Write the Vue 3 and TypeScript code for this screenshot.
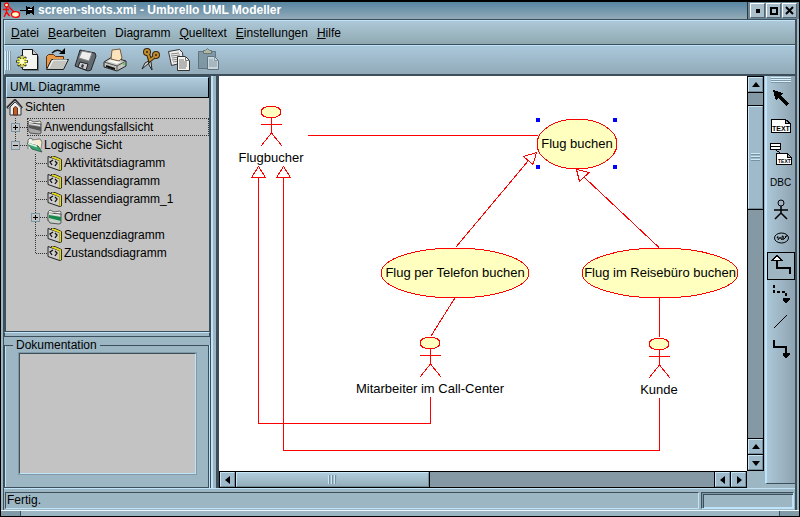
<script setup lang="ts">
import { ref } from 'vue'

interface MenuEntry { before: string; key: string; after: string }
interface TreeNode {
  label: string
  icon: 'home' | 'folder' | 'open' | 'green' | 'diagram'
  depth: number
  toggle?: '+' | '-'
  last?: boolean
}
interface Actor { name: string; x: number; y: number }
interface UseCase { name: string; x: number; y: number; rx: number }

const menus: MenuEntry[] = [
  { before: '', key: 'D', after: 'atei' },
  { before: '', key: 'B', after: 'earbeiten' },
  { before: 'Dia', key: 'g', after: 'ramm' },
  { before: '', key: 'Q', after: 'uelltext' },
  { before: '', key: 'E', after: 'instellungen' },
  { before: '', key: 'H', after: 'ilfe' },
]

const nodes: TreeNode[] = [
  { label: 'Sichten', icon: 'home', depth: 0 },
  { label: 'Anwendungsfallsicht', icon: 'folder', depth: 1, toggle: '+' },
  { label: 'Logische Sicht', icon: 'open', depth: 1, toggle: '-', last: true },
  { label: 'Aktivitätsdiagramm', icon: 'diagram', depth: 2 },
  { label: 'Klassendiagramm', icon: 'diagram', depth: 2 },
  { label: 'Klassendiagramm_1', icon: 'diagram', depth: 2 },
  { label: 'Ordner', icon: 'green', depth: 2, toggle: '+' },
  { label: 'Sequenzdiagramm', icon: 'diagram', depth: 2 },
  { label: 'Zustandsdiagramm', icon: 'diagram', depth: 2, last: true },
]
const selected = ref('Anwendungsfallsicht')

const actors: Actor[] = [
  { name: 'Flugbucher', x: 52, y: 36 },
  { name: 'Mitarbeiter im Call-Center', x: 211, y: 267 },
  { name: 'Kunde', x: 440, y: 268 },
]
const useCases: UseCase[] = [
  { name: 'Flug buchen', x: 358, y: 68, rx: 40 },
  { name: 'Flug per Telefon buchen', x: 236, y: 197, rx: 74 },
  { name: 'Flug im Reisebüro buchen', x: 441, y: 197, rx: 78 },
]
const handles = [[319, 44], [396, 44], [319, 91], [396, 91]]

const tools = ['Auswahl', 'Text', 'Notiz', 'DBC', 'Akteur', 'Anwendungsfall', 'Generalisierung', 'Abhängigkeit', 'Assoziation', 'Gerichtete Assoziation']
const tool = ref('Generalisierung')
const docText = ref('')
</script>

<template>
  <div class="window">
    <header class="titlebar">
      <svg class="app-icon" width="17" height="17" viewBox="0 0 17 17" fill="none" stroke="#f00" stroke-width="1.3">
        <circle cx="3.5" cy="3" r="2" fill="#ffc" /><path d="M3.5 5v5M0 7.5h6M3.5 10L1 15M3.5 10l3 4M6 5l5 5" />
        <ellipse cx="12.5" cy="12.5" rx="4" ry="2.8" fill="#ffc" />
      </svg>
      <svg width="15" height="11" viewBox="0 0 15 11" shape-rendering="crispEdges">
        <path d="M0 5h7v1H0zM6 1h1v9H6zM7 2h2l1 1h2l1-2h1v9h-1l-1-2h-2L9 9H7z" fill="#000" />
        <path d="M8 4h4v1H8z" fill="#fff" />
      </svg>
      <h1>screen-shots.xmi - Umbrello UML Modeller</h1>
      <div class="window-buttons">
        <button aria-label="Minimieren"><svg width="11" height="11"><rect x="4" y="4" width="4" height="4" /></svg></button>
        <button aria-label="Maximieren"><svg width="11" height="11"><rect x="3" y="3" width="6" height="6" fill="none" stroke="#000" stroke-width="2" /></svg></button>
        <button aria-label="Schließen"><svg width="11" height="11"><path d="M2 2l7 7M9 2L2 9" stroke="#000" stroke-width="2" /></svg></button>
      </div>
    </header>

    <div class="shell">
      <nav class="menubar">
        <button v-for="m in menus" :key="m.key">{{ m.before }}<u>{{ m.key }}</u>{{ m.after }}</button>
      </nav>

      <div class="toolbar" role="toolbar">
        <span class="grip"></span>
        <button aria-label="Neu">
          <svg width="24" height="24" viewBox="0 0 24 24">
            <path d="M8 3h10l5 6v14H8z" fill="#667782" />
            <path d="M6.500 1.500h10l5 5v15h-15z" fill="#f4f4f0" stroke="#111" />
            <path d="M16.500 1.500v5h5" fill="#ccc" stroke="#111" />
            <path d="M6 7v13M0 13.500h12M2 9l8 9M10 9l-8 9" stroke="#333" stroke-width="2.500" />
            <path d="M6 8v11M1 13.500h10M2.500 10l7 7M9.500 10l-7 7" stroke="#ff2" stroke-width="1.600" /><circle cx="6" cy="13.500" r="2.500" fill="#ffc" />
          </svg>
        </button>
        <button aria-label="Öffnen">
          <svg width="24" height="24" viewBox="0 0 24 24">
            <path d="M1.500 20.500v-12l2-2h5l2 2h8v4" fill="#e99a4b" stroke="#5a3011" />
            <path d="M1.500 21.500l5-10h17l-5 10z" fill="#c4c4c0" stroke="#222" /><path d="M4 20l4-8h14" fill="none" stroke="#fff" />
            <path d="M7 5q5-5 10-1" fill="none" stroke="#111" stroke-width="1.500" /><path d="M14 6h6V0z" />
          </svg>
        </button>
        <button aria-label="Speichern">
          <svg width="24" height="24" viewBox="0 0 24 24">
            <path d="M6 2l15 3 1 3-5 14-3 1L1 18l1-3z" fill="#626b70" stroke="#24292c" />
            <path d="M8 3l10 2-3 8-10-3z" fill="#eee" stroke="#888" /><path d="M6 14l8 2-2 6-8-3z" fill="#c8ced1" stroke="#222" /><path d="M8 16l2 1-1 3-2-1z" fill="#333" />
          </svg>
        </button>
        <button aria-label="Drucken">
          <svg width="24" height="24" viewBox="0 0 24 24">
            <path d="M1 14l8-5 14 4v5l-9 5-13-4z" fill="#c6c6c1" stroke="#222" />
            <path d="M9 2l8-1 2 9-3 3-8-2z" fill="#fbe3bd" stroke="#775c3d" />
            <path d="M1 14l13 4 9-5M14 18v5" stroke="#555" fill="none" /><path d="M4 13l10 3 4-2-10-2z" fill="#f9f9f5" />
            <path d="M3 18l9 3" stroke="#111" stroke-width="2" /><circle cx="21" cy="16" r="1" fill="#3d3" />
          </svg>
        </button>
        <span class="gap"></span>
        <button aria-label="Ausschneiden">
          <svg width="24" height="24" viewBox="0 0 24 24" fill="none">
            <path d="M10 9l3 5 1 8-3-5zM16 10l-5 5-7 6 3-6z" fill="#ddd" stroke="#222" />
            <g stroke="#38250a" stroke-width="4"><circle cx="9" cy="4" r="2" /><circle cx="18" cy="7" r="2" /><path d="M10 6l2 6 4-3" /></g>
            <g stroke="#c08c2e" stroke-width="2"><circle cx="9" cy="4" r="2" /><circle cx="18" cy="7" r="2" /><path d="M10 6l2 6 4-3" /></g>
          </svg>
        </button>
        <button aria-label="Kopieren">
          <svg width="24" height="24" viewBox="0 0 24 24" fill="none" stroke="#333">
            <path d="M1.500 3.500l11-2 3 3 1 10-12 3z" fill="#eee" /><path d="M4 6l8-1M4 8l9-1M5 10l8-1M5 12l8-1M6 14l7-1" stroke="#888" />
            <path d="M10.500 8.500h8l4 4v10h-12z" fill="#f4f4f0" /><path d="M18.500 8.500v4h4M12 12h5M12 14h8M12 16h8M12 18h8M12 20h7" stroke="#777" />
          </svg>
        </button>
        <button aria-label="Einfügen">
          <svg class="disabled" width="24" height="24" viewBox="0 0 24 24" fill="none" stroke="#52646e">
            <path d="M2.500 3.500h17v17h-17z" fill="#78919b" /><path d="M7.500 5.500v-3h2l2-2 2 2h2v3z" fill="#b9b68e" />
            <path d="M11.500 8.500h7l4 4v9h-11z" fill="#d4dfe3" /><path d="M18.500 8.500v4h4M13 12h4M13 14h8M13 16h8M13 18h8" stroke="#80929c" />
          </svg>
        </button>
      </div>

      <main class="workspace">
        <aside class="sidebar">
          <section class="tree-panel">
            <h2>UML Diagramme</h2>
            <ul class="tree" role="tree">
              <li v-for="n in nodes" :key="n.label" :class="['row', 'depth-' + n.depth]" role="treeitem" @click="selected = n.label">
                <svg v-if="n.depth" class="branch" width="16" height="18" shape-rendering="crispEdges" fill="none">
                  <path :d="n.last ? 'M4.500 0V9' : 'M4.500 0V18'" stroke="#333" stroke-dasharray="1 1" />
                  <path d="M5 9.500H16" stroke="#333" stroke-dasharray="1 1" />
                  <template v-if="n.toggle">
                    <rect x="0.500" y="5.500" width="8" height="8" fill="#c3c3c3" stroke="#7b97a7" />
                    <path :d="n.toggle === '+' ? 'M2 9.500h5M4.500 7v5' : 'M2 9.500h5'" stroke="#000" />
                  </template>
                </svg>
                <span :class="['node', { current: selected === n.label }]">
                  <svg v-if="n.icon === 'home'" width="18" height="17" viewBox="0 0 18 17">
                    <path d="M4 8l5-5 6 5v8H4z" fill="#eee" stroke="#333" /><path d="M1 9l8-8 7 8" fill="none" stroke="#333" stroke-width="2.500" /><path d="M2 9l7-7 6 7" fill="none" stroke="#aaa" />
                    <path d="M7.500 16V9q2-3 4 0v7z" fill="#c75d20" stroke="#532" />
                  </svg>
                  <svg v-else-if="n.icon === 'diagram'" width="16" height="16" viewBox="0 0 16 16">
                    <path d="M4 1.500h4l6.500 3V15l-2 .5V6z" fill="#e6da19" stroke="#333" /><path d="M1 1.500L12.500 5.500v10L1 11.500z" fill="#ccc" stroke="#222" />
                    <path d="M6 5L3 7l2 3M8 6l2 2-2 3" fill="none" stroke="#111" stroke-width="1.300" /><path d="M5 2l8 3v10" fill="none" stroke="#e6da19" stroke-width="1.500" />
                  </svg>
                  <svg v-else width="16" height="16" viewBox="0 0 16 16">
                    <path d="M1 12V3l2-2 4 2 6-1 1 1v3" fill="#f1f1ec" stroke="#666" />
                    <template v-if="n.icon === 'open'">
                      <path d="M5 3l8-1 2 3-1 7" fill="#f6ebd0" stroke="#888" /><path d="M0 6l11 3 4 6-10-3z" fill="#36a56b" stroke="#365" /><path d="M1 6.500l9 3" stroke="#dff5e4" stroke-width="1.500" />
                    </template>
                    <template v-else>
                      <path d="M1 4l13 1v9l-2 1-9-1-2-3z" :fill="n.icon === 'green' ? '#c7d1c9' : '#aaa'" stroke="#555" />
                      <path d="M2 6l12 2v4L2 9z" :fill="n.icon === 'green' ? '#16884b' : '#555'" /><path d="M2 4.500l11 2" stroke="#eee" />
                    </template>
                  </svg>
                  <span>{{ n.label }}</span>
                </span>
              </li>
            </ul>
          </section>
          <div class="hsplit"></div>
          <fieldset class="docs">
            <legend>Dokumentation</legend>
            <textarea v-model="docText" aria-label="Dokumentation"></textarea>
          </fieldset>
        </aside>
        <div class="vsplit"></div>

        <div class="view">
          <div class="canvas">
            <svg class="diagram" width="528" height="395" fill="none" stroke="#f00">
              <g shape-rendering="crispEdges">
                <path d="M89 59.500H319" />
                <path d="M317.500 76.500L304.500 80.500L314 88.500ZM309.500 84.500L237 171" />
                <path d="M357.500 93.500L370 96.500L360.500 105.500ZM365.500 101.500L440 171.500" />
                <path d="M39.500 90.500L46.500 101.500H32.500ZM39.500 102V347.500H211.500V321" />
                <path d="M64.500 90.500L71.500 101.500H57.500ZM64.500 102V374.500H440.500V322" />
                <path d="M236.500 221L212 260M440.500 222V261" />
              </g>
              <g v-for="a in actors" :key="a.name" :transform="`translate(${a.x} ${a.y})`">
                <g shape-rendering="crispEdges">
                  <ellipse cx="0" cy="0" rx="10" ry="6" fill="#ffffc0" />
                  <path d="M0.500 6V21M-10 12.500H11M0.500 21L-10 34M0.500 21L11 34" />
                </g>
                <text x="0" y="50">{{ a.name }}</text>
              </g>
              <g v-for="u in useCases" :key="u.name" :transform="`translate(${u.x} ${u.y})`">
                <ellipse cx="0" cy="0" :rx="u.rx" ry="25" fill="#ffffc0" shape-rendering="crispEdges" />
                <text x="0" y="4">{{ u.name }}</text>
              </g>
              <rect v-for="(h, i) in handles" :key="i" :x="h[0] - 2" :y="h[1] - 2" width="4" height="4" fill="#00f" stroke="none" />
            </svg>
          </div>
          <div class="scroll vertical">
            <button aria-label="Nach oben"><svg width="10" height="10"><path d="M5 2l4 5H1z" /></svg></button>
            <span class="lead"></span>
            <span class="thumb"><i></i></span>
            <span class="track"></span>
            <button aria-label="Nach oben"><svg width="10" height="10"><path d="M5 2l4 5H1z" /></svg></button>
            <button aria-label="Nach unten"><svg width="10" height="10"><path d="M5 8L1 3h8z" /></svg></button>
          </div>
          <div class="scroll horizontal">
            <button aria-label="Nach links"><svg width="10" height="10"><path d="M2 5l5-4v8z" /></svg></button>
            <span class="thumb"><i></i></span>
            <span class="track"></span>
            <button aria-label="Nach links"><svg width="10" height="10"><path d="M2 5l5-4v8z" /></svg></button>
            <button aria-label="Nach rechts"><svg width="10" height="10"><path d="M8 5L3 1v8z" /></svg></button>
          </div>
        </div>

        <div class="palette" role="toolbar">
          <span class="palette-grip"></span>
          <button v-for="t in tools" :key="t" :aria-label="t" :class="{ active: tool === t }" @click="tool = t">
            <svg width="24" height="24" viewBox="0 0 24 24" fill="none" stroke="#000" shape-rendering="crispEdges">
              <path v-if="t === 'Auswahl'" d="M4 4l10 3-2 3 8 7-3 3-8-8-2 3z" fill="#000" stroke="none" />
              <template v-else-if="t === 'Text'">
                <path d="M2.500 5.500h14l5 4v9h-19zM16.500 5.500v4h5" fill="#fff" /><text class="glyph" x="3" y="17">TEXT</text>
              </template>
              <template v-else-if="t === 'Notiz'">
                <path d="M1.500 1.500h10v6h-10zM1.500 4.500h10" fill="#fff" /><path d="M7 8l6 5" stroke-dasharray="1 1" />
                <path d="M7.500 11.500h11l4 4v7h-15zM18.500 11.500v4h4" fill="#fff" /><text class="glyph tiny" x="9" y="21">TEXT</text>
              </template>
              <text v-else-if="t === 'DBC'" class="dbc" x="1" y="16">DBC</text>
              <g v-else-if="t === 'Akteur'" shape-rendering="auto"><circle cx="12" cy="5" r="3" /><path d="M5 12h14" stroke-width="1.500" /><path d="M12 8v8M12 15l-6 6M12 15l6 6" stroke-width="1.500" /></g>
              <g v-else-if="t === 'Anwendungsfall'" shape-rendering="auto"><ellipse cx="12.500" cy="12" rx="7" ry="5" /><path d="M8 12q1-3 1 0t1 1 1-2 1 2 1-1 1-2 0 3 2-1 1-2 0 2" /></g>
              <g v-else-if="t === 'Generalisierung'"><path d="M8 6v8h13v6" stroke-width="2" /><path d="M8 1.500l5 5H3z" fill="#fff" /></g>
              <g v-else-if="t === 'Abhängigkeit'"><path d="M5 3v7h12v5" stroke-width="2" stroke-dasharray="3 2" /><path d="M14 16h6v2l-3 3-3-3z" fill="#000" /></g>
              <path v-else-if="t === 'Assoziation'" d="M5 18L18 5" shape-rendering="auto" />
              <g v-else><path d="M5 2v7h12v7" stroke-width="2" /><path d="M14 15h6v2l-3 3-3-3z" fill="#000" /></g>
            </svg>
          </button>
        </div>
      </main>

      <footer class="statusbar">
        <p>Fertig.</p>
        <span class="progress"></span>
      </footer>
    </div>
    <div class="resize"><span></span><span></span><span></span></div>
  </div>
</template>

<style>
body {
  margin: 0;
}
</style>

<style scoped>
* {
  box-sizing: border-box;
}
.window {
  --base: #9cb6c4;
  --light: #bfe4fa;
  --dark: #3d4f5a;
  --mid: #7c97a6;
  display: flex;
  flex-direction: column;
  min-height: 100vh;
  border: solid #000;
  border-width: 2px 1px 1px;
  background: var(--base);
  color: #000;
  font: 12px/18px "Liberation Sans", Arial, sans-serif;
}
button {
  display: flex;
  align-items: center;
  justify-content: center;
  padding: 0;
  border: 0;
  background: none;
  color: inherit;
  font: inherit;
}
svg {
  display: block;
  flex: none;
}
.titlebar {
  display: flex;
  align-items: center;
  height: 17px;
  padding-left: 2px;
  background: linear-gradient(#5685a1, #93abb8);
}
.titlebar h1 {
  flex: 1;
  margin: 0 0 0 3px;
  color: #fff;
  font-size: 12px;
  line-height: 17px;
}
.window-buttons {
  display: flex;
  height: 17px;
  padding: 1px 2px 0;
  gap: 1px;
  border-left: 1px solid #26353f;
  background: #6c8796;
}
.window-buttons button {
  width: 15px;
  height: 15px;
  border: 1px solid #fff;
  border-right-color: #526673;
  border-bottom-color: #526673;
  background: #aabfcb;
}
.shell {
  display: flex;
  flex: 1;
  flex-direction: column;
  margin: 0 2px;
  border: solid var(--dark);
  border-width: 1px 2px 0 1px;
}
.menubar {
  display: flex;
  align-items: center;
  height: 25px;
  padding-left: 2px;
  border: solid var(--light);
  border-width: 1px 0 0 1px;
  border-bottom: 1px solid var(--dark);
  background: linear-gradient(#adc8d9, #90a9b0);
}
.menubar button {
  padding: 0 5px 0 4px;
}
.toolbar {
  display: flex;
  align-items: center;
  height: 30px;
  border: solid var(--light);
  border-width: 1px 0 0 1px;
  border-bottom: 1px solid var(--dark);
  background: linear-gradient(#aac8db, #92aab8);
}
.toolbar button {
  width: 29px;
  height: 27px;
}
.grip {
  width: 6px;
  height: 19px;
  margin-right: 2px;
  background: repeating-linear-gradient(90deg, #d6effb 0 1px, #8299a6 1px 2px);
}
.gap {
  width: 6px;
}
.disabled {
  opacity: 0.8;
}
.workspace {
  display: flex;
  flex: 1;
  border-top: 1px solid var(--dark);
}
.sidebar {
  display: flex;
  flex-direction: column;
  width: 206px;
}
.tree-panel {
  flex: 1;
  border: solid var(--dark);
  border-width: 1px 1px 1px 2px;
  background: #c3c3c3;
}
.tree-panel h2 {
  height: 21px;
  margin: 0;
  padding-left: 3px;
  border: 1px solid #000;
  border-top-color: var(--light);
  border-left-color: var(--light);
  background: linear-gradient(#b0cbdb, #8fabba);
  font-size: 12px;
  font-weight: 400;
  line-height: 19px;
}
.tree {
  margin: 0;
  padding: 0;
  list-style: none;
}
.row {
  display: flex;
  height: 18px;
}
.depth-0 {
  margin-bottom: 2px;
}
.depth-1 {
  padding-left: 5px;
}
.depth-2 {
  padding-left: 25px;
}
.node {
  display: flex;
  flex: 1;
  align-items: center;
  gap: 1px;
  outline-offset: -1px;
}
.current {
  outline: 1px dotted #333;
}
.hsplit {
  height: 5px;
  border: 1px solid var(--dark);
  border-top-color: var(--light);
  background: var(--base);
}
.docs {
  margin: 0 1px 0 0;
  padding: 0 12px 13px 14px;
  border: 1px solid var(--dark);
  box-shadow: inset 1px 0 var(--light), 0 1px var(--light), 1px 0 var(--light);
}
.docs legend {
  margin-left: -6px;
  padding: 0 3px;
  line-height: 16px;
}
.docs textarea {
  display: block;
  width: 100%;
  height: 121px;
  border: 1px solid var(--dark);
  border-right-color: var(--light);
  border-bottom-color: var(--light);
  outline: 1px solid #8299a7;
  background: #c3c3c3;
  font: inherit;
  resize: none;
}
.vsplit {
  width: 9px;
  border: solid var(--dark);
  border-width: 0 3px 0 1px;
  background: linear-gradient(90deg, var(--light) 0 2px, var(--base) 2px);
}
.view {
  display: grid;
  flex: 1;
  grid-template: 1fr 17px / 1fr 17px;
  min-width: 0;
}
.canvas {
  overflow: hidden;
  background: #fff;
}
.diagram text {
  fill: #000;
  stroke: none;
  font-size: 13px;
  text-anchor: middle;
}
.scroll {
  display: flex;
  gap: 1px;
  padding: 1px;
  background: #000;
}
.vertical {
  flex-direction: column;
}
.scroll button,
.thumb {
  flex: none;
  border: 1px solid #c7e6f6;
  border-right-color: #718c9b;
  border-bottom-color: #718c9b;
  background: #9fbaca;
}
.scroll button {
  width: 15px;
  height: 15px;
}
.thumb {
  display: flex;
  align-items: center;
  justify-content: center;
}
.vertical .thumb {
  height: 103px;
}
.horizontal .thumb {
  width: 193px;
  background: linear-gradient(#b0ccdc, #94adba);
}
.thumb i {
  width: 9px;
  height: 9px;
  background: repeating-linear-gradient(#cbe8f7 0 1px, #7891a0 1px 2px, #a1bac8 2px 3px);
}
.horizontal .thumb i {
  background: repeating-linear-gradient(90deg, #cbe8f7 0 1px, #7891a0 1px 2px, #a1bac8 2px 3px);
}
.lead {
  height: 12px;
  background: #8499a6;
}
.track {
  flex: 1;
  background: #8599a5;
}
.palette {
  display: flex;
  flex-direction: column;
  align-items: center;
  width: 30px;
  margin: 0 0 4px 1px;
  border-left: 2px solid var(--light);
  border-bottom: 1px solid var(--dark);
  background: linear-gradient(90deg, #abc7d7, #8fa3b1);
}
.palette button {
  width: 28px;
  height: 28px;
}
.palette .active {
  border: 1px solid #000;
  border-right-color: #d5effc;
  border-bottom-color: #d5effc;
  outline: 1px solid #000;
  outline-offset: -1px;
  background: #9fb5c2;
}
.palette-grip {
  width: 20px;
  height: 6px;
  margin: 1px 0;
  background: repeating-linear-gradient(#d8f1fd 0 1px, #7d97a6 1px 2px);
}
.glyph {
  fill: #000;
  stroke: none;
  font-size: 7px;
  font-weight: 700;
}
.tiny {
  font-size: 5px;
}
.dbc {
  fill: #000;
  stroke: none;
  font-size: 10px;
}
.statusbar {
  display: flex;
  gap: 2px;
  height: 22px;
  padding: 3px 1px 1px 1px;
  border-top: 1px solid var(--light);
}
.statusbar p,
.progress {
  margin: 0;
  border: 1px solid var(--dark);
  border-right-color: var(--light);
  border-bottom-color: var(--light);
}
.statusbar p {
  flex: 1;
  padding-left: 1px;
  line-height: 15px;
}
.progress {
  width: 93px;
  box-shadow: inset 1px 1px var(--mid), inset 2px 2px var(--dark), inset -1px -1px var(--light);
}
.resize {
  display: grid;
  grid-template-columns: 19px 1fr 19px;
  height: 6px;
  gap: 1px;
  border-top: 1px solid #e9f7ff;
  background: var(--dark);
}
.resize span {
  background: #819aa8;
}
.resize span:nth-child(2) {
  background: var(--base);
}
</style>
